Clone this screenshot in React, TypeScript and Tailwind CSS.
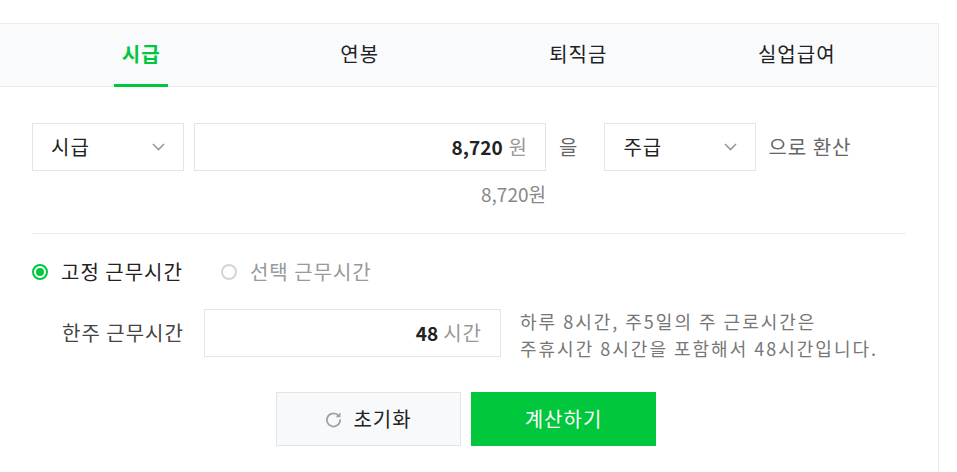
import { useState } from 'react';

const TABS = ['시급', '연봉', '퇴직금', '실업급여'];

const FONT = { fontFamily: '"Noto Sans CJK KR", "Noto Sans", sans-serif' };

function Chevron() {
  return (
    <svg width="13" height="8" viewBox="0 0 13 8" fill="none">
      <path d="M1 1l5.5 5.5L12 1" stroke="#999" strokeWidth="1.6" />
    </svg>
  );
}

function ResetIcon() {
  return (
    <svg width="17" height="17" viewBox="0 0 16 16" fill="none">
      <path d="M12.9 4.6A6.2 6.2 0 1 0 14.2 8.6" stroke="#a3a3a3" strokeWidth="1.7" strokeLinecap="round" />
      <path d="M14.6 1.2v4.6H10z" fill="#a3a3a3" />
    </svg>
  );
}

function SelectBox({ label }: { label: string }) {
  return (
    <div className="flex h-12 w-[152px] items-center justify-between border border-[#e1e5eb] bg-white pl-[18px] pr-[18px] text-[20px] tracking-[1px] text-[#222]">
      <span>{label}</span>
      <Chevron />
    </div>
  );
}

function Radio({ on }: { on: boolean }) {
  return (
    <span
      className={`flex h-[16px] w-[16px] items-center justify-center rounded-full border-2 ${
        on ? 'border-[#00c73c]' : 'border-[#d5d5d5]'
      }`}
    >
      {on && <span className="h-[8px] w-[8px] rounded-full bg-[#00c73c]" />}
    </span>
  );
}

export default function App() {
  const [active, setActive] = useState(0);
  const [fixed, setFixed] = useState(true);

  return (
    <div className="h-[472px] w-[957px] overflow-hidden bg-white pt-[23px]" style={FONT}>
      <div className="h-[460px] w-[939px] border-r border-t border-[#ececec]">
        {/* Tabs */}
        <div className="grid h-[63px] grid-cols-4 border-b border-[#e9ebee] bg-[#f9fafc] px-8">
          {TABS.map((t, i) => (
            <button
              key={t}
              onClick={() => setActive(i)}
              className={`relative flex items-center justify-center text-[20px] tracking-[1px] ${
                i === active ? 'font-bold text-[#00c73c]' : 'text-[#222]'
              }`}
            >
              <span className="-mt-[2px]">{t}</span>
              {i === active && (
                <span className="absolute bottom-[-1px] left-1/2 h-[3px] w-[54px] -translate-x-1/2 bg-[#00c73c]" />
              )}
            </button>
          ))}
        </div>

        <div className="px-8 pt-[36px]">
          {/* Convert row */}
          <div className="flex h-12 items-center">
            <SelectBox label="시급" />
            <div className="ml-[10px] flex h-12 w-[352px] items-center justify-end border border-[#e1e5eb] pr-[18px]">
              <span className="text-[19px] font-bold text-[#222]">8,720</span>
              <span className="ml-[6px] text-[20px] text-[#999]">원</span>
            </div>
            <span className="ml-[13px] text-[20px] text-[#666]">을</span>
            <div className="ml-[27px]">
              <SelectBox label="주급" />
            </div>
            <span className="ml-[12px] text-[20px] tracking-[1px] text-[#666]">으로 환산</span>
          </div>
          <div className="mt-[11px] w-[514px] text-right text-[19px] leading-[24px] text-[#888]">8,720원</div>

          <div className="mt-[27px] border-t border-[#eceef1]" />

          {/* Work type radios */}
          <div className="mt-[24px] flex h-[28px] items-center text-[20px] tracking-[1px]">
            <button onClick={() => setFixed(true)} className="flex items-center">
              <Radio on={fixed} />
              <span className={`ml-[13px] ${fixed ? 'text-[#222]' : 'text-[#999]'}`}>고정 근무시간</span>
            </button>
            <button onClick={() => setFixed(false)} className="ml-[38px] flex items-center">
              <Radio on={!fixed} />
              <span className={`ml-[13px] ${!fixed ? 'text-[#222]' : 'text-[#999]'}`}>선택 근무시간</span>
            </button>
          </div>

          {/* Weekly hours */}
          <div className="mt-[23px] flex items-start">
            <div className="flex h-12 w-[172px] items-center pl-[30px] text-[20px] tracking-[1px] text-[#444]">
              한주 근무시간
            </div>
            <div className="flex h-12 w-[297px] items-center justify-end border border-[#e1e5eb] pr-[18px]">
              <span className="text-[19px] font-bold text-[#222]">48</span>
              <span className="ml-[5px] text-[20px] tracking-[1px] text-[#999]">시간</span>
            </div>
            <p className="-mt-[1px] ml-[19px] text-[18px] leading-[27px] tracking-[2px] text-[#777]">
              하루 8시간, 주5일의 주 근로시간은
              <br />
              주휴시간 8시간을 포함해서 48시간입니다.
            </p>
          </div>

          {/* Actions */}
          <div className="mt-[30px] flex justify-center gap-[10px] pr-[6px]">
            <button className="flex h-[54px] w-[185px] items-center justify-center border border-[#e1e4e9] bg-[#f8f9fb] text-[20px] tracking-[1px] text-[#222]">
              <ResetIcon />
              <span className="ml-[11px]">초기화</span>
            </button>
            <button className="flex h-[54px] w-[185px] items-center justify-center bg-[#00c73c] text-[20px] tracking-[1px] text-white">
              계산하기
            </button>
          </div>
        </div>
      </div>
    </div>
  );
}
